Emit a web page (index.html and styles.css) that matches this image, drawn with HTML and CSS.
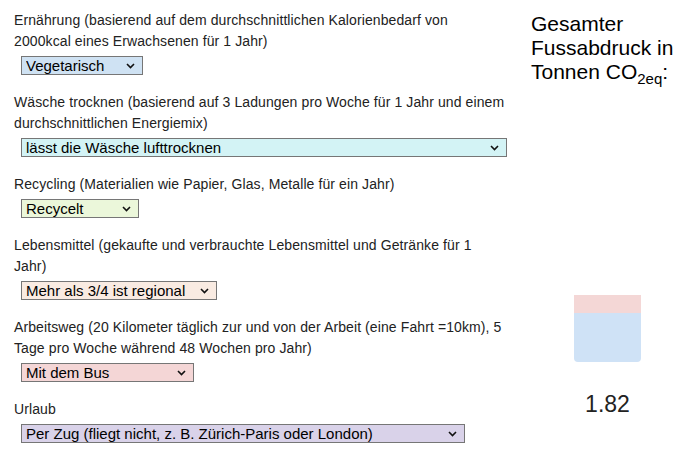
FILE: index.html
```html
<!DOCTYPE html>
<html lang="de">
<head>
<meta charset="utf-8">
<title>Fussabdruck</title>
<link rel="stylesheet" href="styles.css">
</head>
<body>
<div class="page">
  <div class="form">
    <div class="field">
      <p class="label">Ernährung (basierend auf dem durchschnittlichen Kalorienbedarf von<br>2000kcal eines Erwachsenen für 1 Jahr)</p>
      <span class="select-wrap">
        <select class="select sel-blue w-veg"><option>Vegetarisch</option></select>
        <svg class="chev" width="9" height="6" viewBox="0 0 9 6"><path d="M1 1 L4.5 4.5 L8 1" fill="none" stroke="#111" stroke-width="1.6"/></svg>
      </span>
    </div>
    <div class="field">
      <p class="label">Wäsche trocknen (basierend auf 3 Ladungen pro Woche für 1 Jahr und einem<br>durchschnittlichen Energiemix)</p>
      <span class="select-wrap">
        <select class="select sel-cyan w-wash"><option>lässt die Wäsche lufttrocknen</option></select>
        <svg class="chev" width="9" height="6" viewBox="0 0 9 6"><path d="M1 1 L4.5 4.5 L8 1" fill="none" stroke="#111" stroke-width="1.6"/></svg>
      </span>
    </div>
    <div class="field">
      <p class="label">Recycling (Materialien wie Papier, Glas, Metalle für ein Jahr)</p>
      <span class="select-wrap">
        <select class="select sel-green w-rec"><option>Recycelt</option></select>
        <svg class="chev" width="9" height="6" viewBox="0 0 9 6"><path d="M1 1 L4.5 4.5 L8 1" fill="none" stroke="#111" stroke-width="1.6"/></svg>
      </span>
    </div>
    <div class="field">
      <p class="label">Lebensmittel (gekaufte und verbrauchte Lebensmittel und Getränke für 1<br>Jahr)</p>
      <span class="select-wrap">
        <select class="select sel-peach w-food"><option>Mehr als 3/4 ist regional</option></select>
        <svg class="chev" width="9" height="6" viewBox="0 0 9 6"><path d="M1 1 L4.5 4.5 L8 1" fill="none" stroke="#111" stroke-width="1.6"/></svg>
      </span>
    </div>
    <div class="field">
      <p class="label">Arbeitsweg (20 Kilometer täglich zur und von der Arbeit (eine Fahrt =10km), 5<br>Tage pro Woche während 48 Wochen pro Jahr)</p>
      <span class="select-wrap">
        <select class="select sel-red w-bus"><option>Mit dem Bus</option></select>
        <svg class="chev" width="9" height="6" viewBox="0 0 9 6"><path d="M1 1 L4.5 4.5 L8 1" fill="none" stroke="#111" stroke-width="1.6"/></svg>
      </span>
    </div>
    <div class="field">
      <p class="label">Urlaub</p>
      <span class="select-wrap">
        <select class="select sel-purple w-trip"><option>Per Zug (fliegt nicht, z. B. Zürich-Paris oder London)</option></select>
        <svg class="chev" width="9" height="6" viewBox="0 0 9 6"><path d="M1 1 L4.5 4.5 L8 1" fill="none" stroke="#111" stroke-width="1.6"/></svg>
      </span>
    </div>
  </div>
  <div class="result">
    <h2 class="title">Gesamter Fussabdruck in Tonnen CO<sub class="sub">2eq</sub>:</h2>
    <div class="chart">
      <div class="bar">
        <div class="seg seg-red"></div>
        <div class="seg seg-blue"></div>
      </div>
    </div>
    <div class="total">1.82</div>
  </div>
</div>
</body>
</html>
```

FILE: styles.css
```css
html, body {
  margin: 0;
  padding: 0;
  background: #ffffff;
}

body {
  font-family: "Liberation Sans", Arial, sans-serif;
  color: #222222;
}

.page {
  display: flex;
  width: 684px;
  height: 470px;
  overflow: hidden;
}

.form {
  width: 517px;
  padding: 10px 0 0 14px;
  box-sizing: border-box;
}

.field {
  display: flex;
  flex-direction: column;
  align-items: flex-start;
  margin-bottom: 17px;
}

.label {
  margin: 0;
  font-size: 14px;
  letter-spacing: 0.1px;
  line-height: 21px;
  white-space: nowrap;
}

.select-wrap {
  position: relative;
  display: inline-block;
  margin: 4px 0 0 7px;
  height: 19px;
}

.select {
  -webkit-appearance: none;
  appearance: none;
  display: block;
  height: 19px;
  margin: 0;
  padding: 0 0 0 4px;
  border: 1px solid #767676;
  border-radius: 0;
  font-family: "Liberation Sans", Arial, sans-serif;
  font-size: 15px;
  line-height: 17px;
  color: #000000;
  box-sizing: border-box;
}

.chev {
  position: absolute;
  right: 8px;
  top: 7px;
  pointer-events: none;
}

.sel-blue { background: #cfe2f3; }
.sel-cyan { background: #d3f3f5; }
.sel-green { background: #ebf7da; }
.sel-peach { background: #f9ebe2; }
.sel-red { background: #f4d6d6; }
.sel-purple { background: #d9d2e9; }

.w-veg { width: 122px; }
.w-wash { width: 486px; }
.w-rec { width: 118px; }
.w-food { width: 196px; }
.w-bus { width: 173px; }
.w-trip { width: 444px; }

.result {
  flex: 1;
  padding: 12px 0 0 14px;
  display: flex;
  flex-direction: column;
}

.title {
  margin: 0;
  font-size: 21px;
  font-weight: normal;
  line-height: 24px;
  color: #000000;
}

.sub {
  font-size: 15px;
}

.chart {
  display: flex;
  justify-content: center;
  margin-top: 204px;
}

.bar {
  width: 67px;
  height: 67px;
  display: flex;
  flex-direction: column;
  border-radius: 0 0 4px 4px;
  overflow: hidden;
}

.seg-red {
  height: 18px;
  background: #f4d7d6;
}

.seg-blue {
  flex: 1;
  background: #cfe2f6;
}

.total {
  margin-top: 28px;
  text-align: center;
  font-size: 23px;
  line-height: 28px;
  color: #222222;
}
```
